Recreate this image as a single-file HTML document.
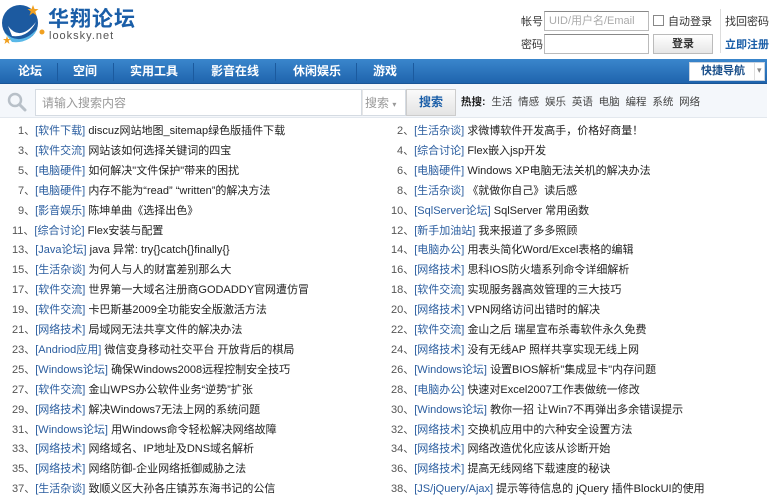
<!DOCTYPE html>
<html><head><meta charset="utf-8">
<style>
*{margin:0;padding:0;box-sizing:border-box}
body{width:775px;height:502px;overflow:hidden;background:#fff;font-family:"Liberation Sans","Noto Sans CJK SC",sans-serif;font-size:12px;line-height:14px;color:#333;position:relative}
.a{position:absolute;white-space:nowrap}
#nav{left:0;top:59px;width:767px;height:25px;background:linear-gradient(#3a86cc,#1f64ad);border-bottom:1px solid #1a5596}
#nav span{position:absolute;top:5px;color:#fff;font-weight:bold;font-size:12px;line-height:14px}
.sep{position:absolute;top:4px;width:1px;height:18px;background:#4f8fcf;border-right:1px solid #1b5a9e}
#sb{left:0;top:84px;width:767px;height:34px;background:#f4f7fb;border-bottom:1px solid #e3e8ee}
.row{position:absolute;height:20px;line-height:20px;font-size:11px;white-space:nowrap}
.n{color:#555}.c{color:#2a5d9f}.t{color:#222}
</style></head><body>
<svg class="a" style="left:0;top:2px" width="48" height="48" viewBox="0 0 48 48">
<circle cx="20" cy="21" r="18" fill="#1c5aa0"/>
<path d="M4 30 Q20 46 38 26 Q30 42 12 40 Z" fill="#59b8e8"/>
<path d="M8 24 Q20 40 36 20 Q28 36 12 34 Z" fill="#fff"/>
<polygon points="33,3 34.5,7 38.5,7 35.3,9.5 36.5,13.5 33,11 29.5,13.5 30.7,9.5 27.5,7 31.5,7" fill="#f0a020"/>
<polygon points="7,34 8,37 11,37 8.6,38.8 9.5,42 7,40 4.5,42 5.4,38.8 3,37 6,37" fill="#f0a020"/>
<circle cx="42" cy="30" r="2.5" fill="#f0a020"/>
</svg>
<div class="a" style="left:48px;top:8px;font-size:21px;line-height:24px;font-weight:bold;color:#1a5ea8;letter-spacing:1px">华翔论坛</div>
<div class="a" style="left:49px;top:30px;font-size:11px;line-height:12px;color:#555;letter-spacing:1px">looksky.net</div>

<div class="a" style="left:521px;top:15px;font-size:11px">帐号</div>
<div class="a" style="left:544px;top:11px;width:105px;height:20px;border:1px solid #bbb;border-top-color:#888;color:#aaa;padding:3px 4px;font-size:11px;line-height:13px">UID/用户名/Email</div>
<div class="a" style="left:653px;top:15px;width:11px;height:11px;border:1px solid #888;background:#fff"></div>
<div class="a" style="left:668px;top:15px;font-size:11px">自动登录</div>
<div class="a" style="left:720px;top:9px;width:1px;height:44px;background:#ddd"></div>
<div class="a" style="left:725px;top:15px;font-size:11px">找回密码</div>
<div class="a" style="left:521px;top:38px;font-size:11px">密码</div>
<div class="a" style="left:544px;top:34px;width:105px;height:20px;border:1px solid #bbb;border-top-color:#888"></div>
<div class="a" style="left:653px;top:34px;width:60px;height:20px;border:1px solid #bbb;background:linear-gradient(#fff,#e6e6e6);text-align:center;line-height:18px;font-weight:bold;color:#333;font-size:11px">登录</div>
<div class="a" style="left:725px;top:38px;color:#1a5ea8;font-weight:bold;font-size:11px">立即注册</div>

<div class="a" id="nav">
<span style="left:18px">论坛</span><div class="sep" style="left:57px"></div>
<span style="left:73px">空间</span><div class="sep" style="left:113px"></div>
<span style="left:130px">实用工具</span><div class="sep" style="left:193px"></div>
<span style="left:211px">影音在线</span><div class="sep" style="left:275px"></div>
<span style="left:293px">休闲娱乐</span><div class="sep" style="left:356px"></div>
<span style="left:373px">游戏</span><div class="sep" style="left:413px"></div>
<div class="a" style="left:689px;top:3px;width:76px;height:19px;background:#fff;border:1px solid #c8d3e0"></div>
<span style="left:701px;top:5px;color:#1a4f8a;font-size:11px">快捷导航</span>
<div class="a" style="left:754px;top:4px;width:1px;height:17px;background:#ddd"></div>
<div class="a" style="left:757px;top:6px;color:#888;font-size:9px;line-height:10px">▾</div>
</div>

<div class="a" id="sb">
<svg class="a" style="left:6px;top:8px" width="24" height="20" viewBox="0 0 24 20"><circle cx="9" cy="8" r="6" fill="none" stroke="#b8c0c8" stroke-width="2.5"/><line x1="13.5" y1="12.5" x2="19" y2="18" stroke="#b8c0c8" stroke-width="3" stroke-linecap="round"/></svg>
<div class="a" style="left:35px;top:5px;width:327px;height:27px;border:1px solid #d5dbe2;background:#fff;color:#999;padding:6px 6px;line-height:14px">请输入搜索内容</div>
<div class="a" style="left:362px;top:5px;width:44px;height:27px;border:1px solid #d5dbe2;border-left:1px solid #e6e6e6;background:#fff;color:#999;padding:6px 2px;line-height:14px">搜索 <span style="font-size:8px">▾</span></div>
<div class="a" style="left:406px;top:5px;width:50px;height:27px;border:1px solid #ccc;background:linear-gradient(#fafafa,#e4e4e4);color:#1a5ea8;font-weight:bold;text-align:center;line-height:25px">搜索</div>
<div class="a" style="left:461px;top:12px;font-size:10.5px;line-height:12px;color:#444"><b style="color:#222">热搜:</b>&nbsp; 生活&nbsp; 情感&nbsp; 娱乐&nbsp; 英语&nbsp; 电脑&nbsp; 编程&nbsp; 系统&nbsp; 网络</div>
</div>

<div id="list"></div>
<script>
var L=[
["1","软件下载","discuz网站地图_sitemap绿色版插件下载"],["2","生活杂谈","求微博软件开发高手，价格好商量！"],
["3","软件交流","网站该如何选择关键词的四宝"],["4","综合讨论","Flex嵌入jsp开发"],
["5","电脑硬件","如何解决\"文件保护\"带来的困扰"],["6","电脑硬件","Windows XP电脑无法关机的解决办法"],
["7","电脑硬件","内存不能为“read” “written”的解决方法"],["8","生活杂谈","《就做你自己》读后感"],
["9","影音娱乐","陈坤单曲《选择出色》"],["10","SqlServer论坛","SqlServer 常用函数"],
["11","综合讨论","Flex安装与配置"],["12","新手加油站","我来报道了多多照顾"],
["13","Java论坛","java 异常: try{}catch{}finally{}"],["14","电脑办公","用表头简化Word/Excel表格的编辑"],
["15","生活杂谈","为何人与人的财富差别那么大"],["16","网络技术","思科IOS防火墙系列命令详细解析"],
["17","软件交流","世界第一大域名注册商GODADDY官网遭仿冒"],["18","软件交流","实现服务器高效管理的三大技巧"],
["19","软件交流","卡巴斯基2009全功能安全版激活方法"],["20","网络技术","VPN网络访问出错时的解决"],
["21","网络技术","局域网无法共享文件的解决办法"],["22","软件交流","金山之后 瑞星宣布杀毒软件永久免费"],
["23","Andriod应用","微信变身移动社交平台 开放背后的棋局"],["24","网络技术","没有无线AP 照样共享实现无线上网"],
["25","Windows论坛","确保Windows2008远程控制安全技巧"],["26","Windows论坛","设置BIOS解析\"集成显卡\"内存问题"],
["27","软件交流","金山WPS办公软件业务“逆势”扩张"],["28","电脑办公","快速对Excel2007工作表做统一修改"],
["29","网络技术","解决Windows7无法上网的系统问题"],["30","Windows论坛","教你一招 让Win7不再弹出多余错误提示"],
["31","Windows论坛","用Windows命令轻松解决网络故障"],["32","网络技术","交换机应用中的六种安全设置方法"],
["33","网络技术","网络域名、IP地址及DNS域名解析"],["34","网络技术","网络改造优化应该从诊断开始"],
["35","网络技术","网络防御-企业网络抵御威胁之法"],["36","网络技术","提高无线网络下载速度的秘诀"],
["37","生活杂谈","致顺义区大孙各庄镇苏东海书记的公信"],["38","JS/jQuery/Ajax","提示等待信息的 jQuery 插件BlockUI的使用"]];
var h="";
for(var i=0;i<L.length;i++){var r=L[i],col=i%2,row=Math.floor(i/2);
var x=col?(r[0].length>1?391:397):(r[0].length>1?12:18);
h+='<div class="row" style="left:'+x+'px;top:'+(121+row*19.9)+'px"><span class="n">'+r[0]+'、</span><span class="c">['+r[1]+']</span> <span class="t">'+r[2].replace(/</g,"&lt;")+'</span></div>';}
document.getElementById("list").innerHTML=h;
</script>
</body></html>
